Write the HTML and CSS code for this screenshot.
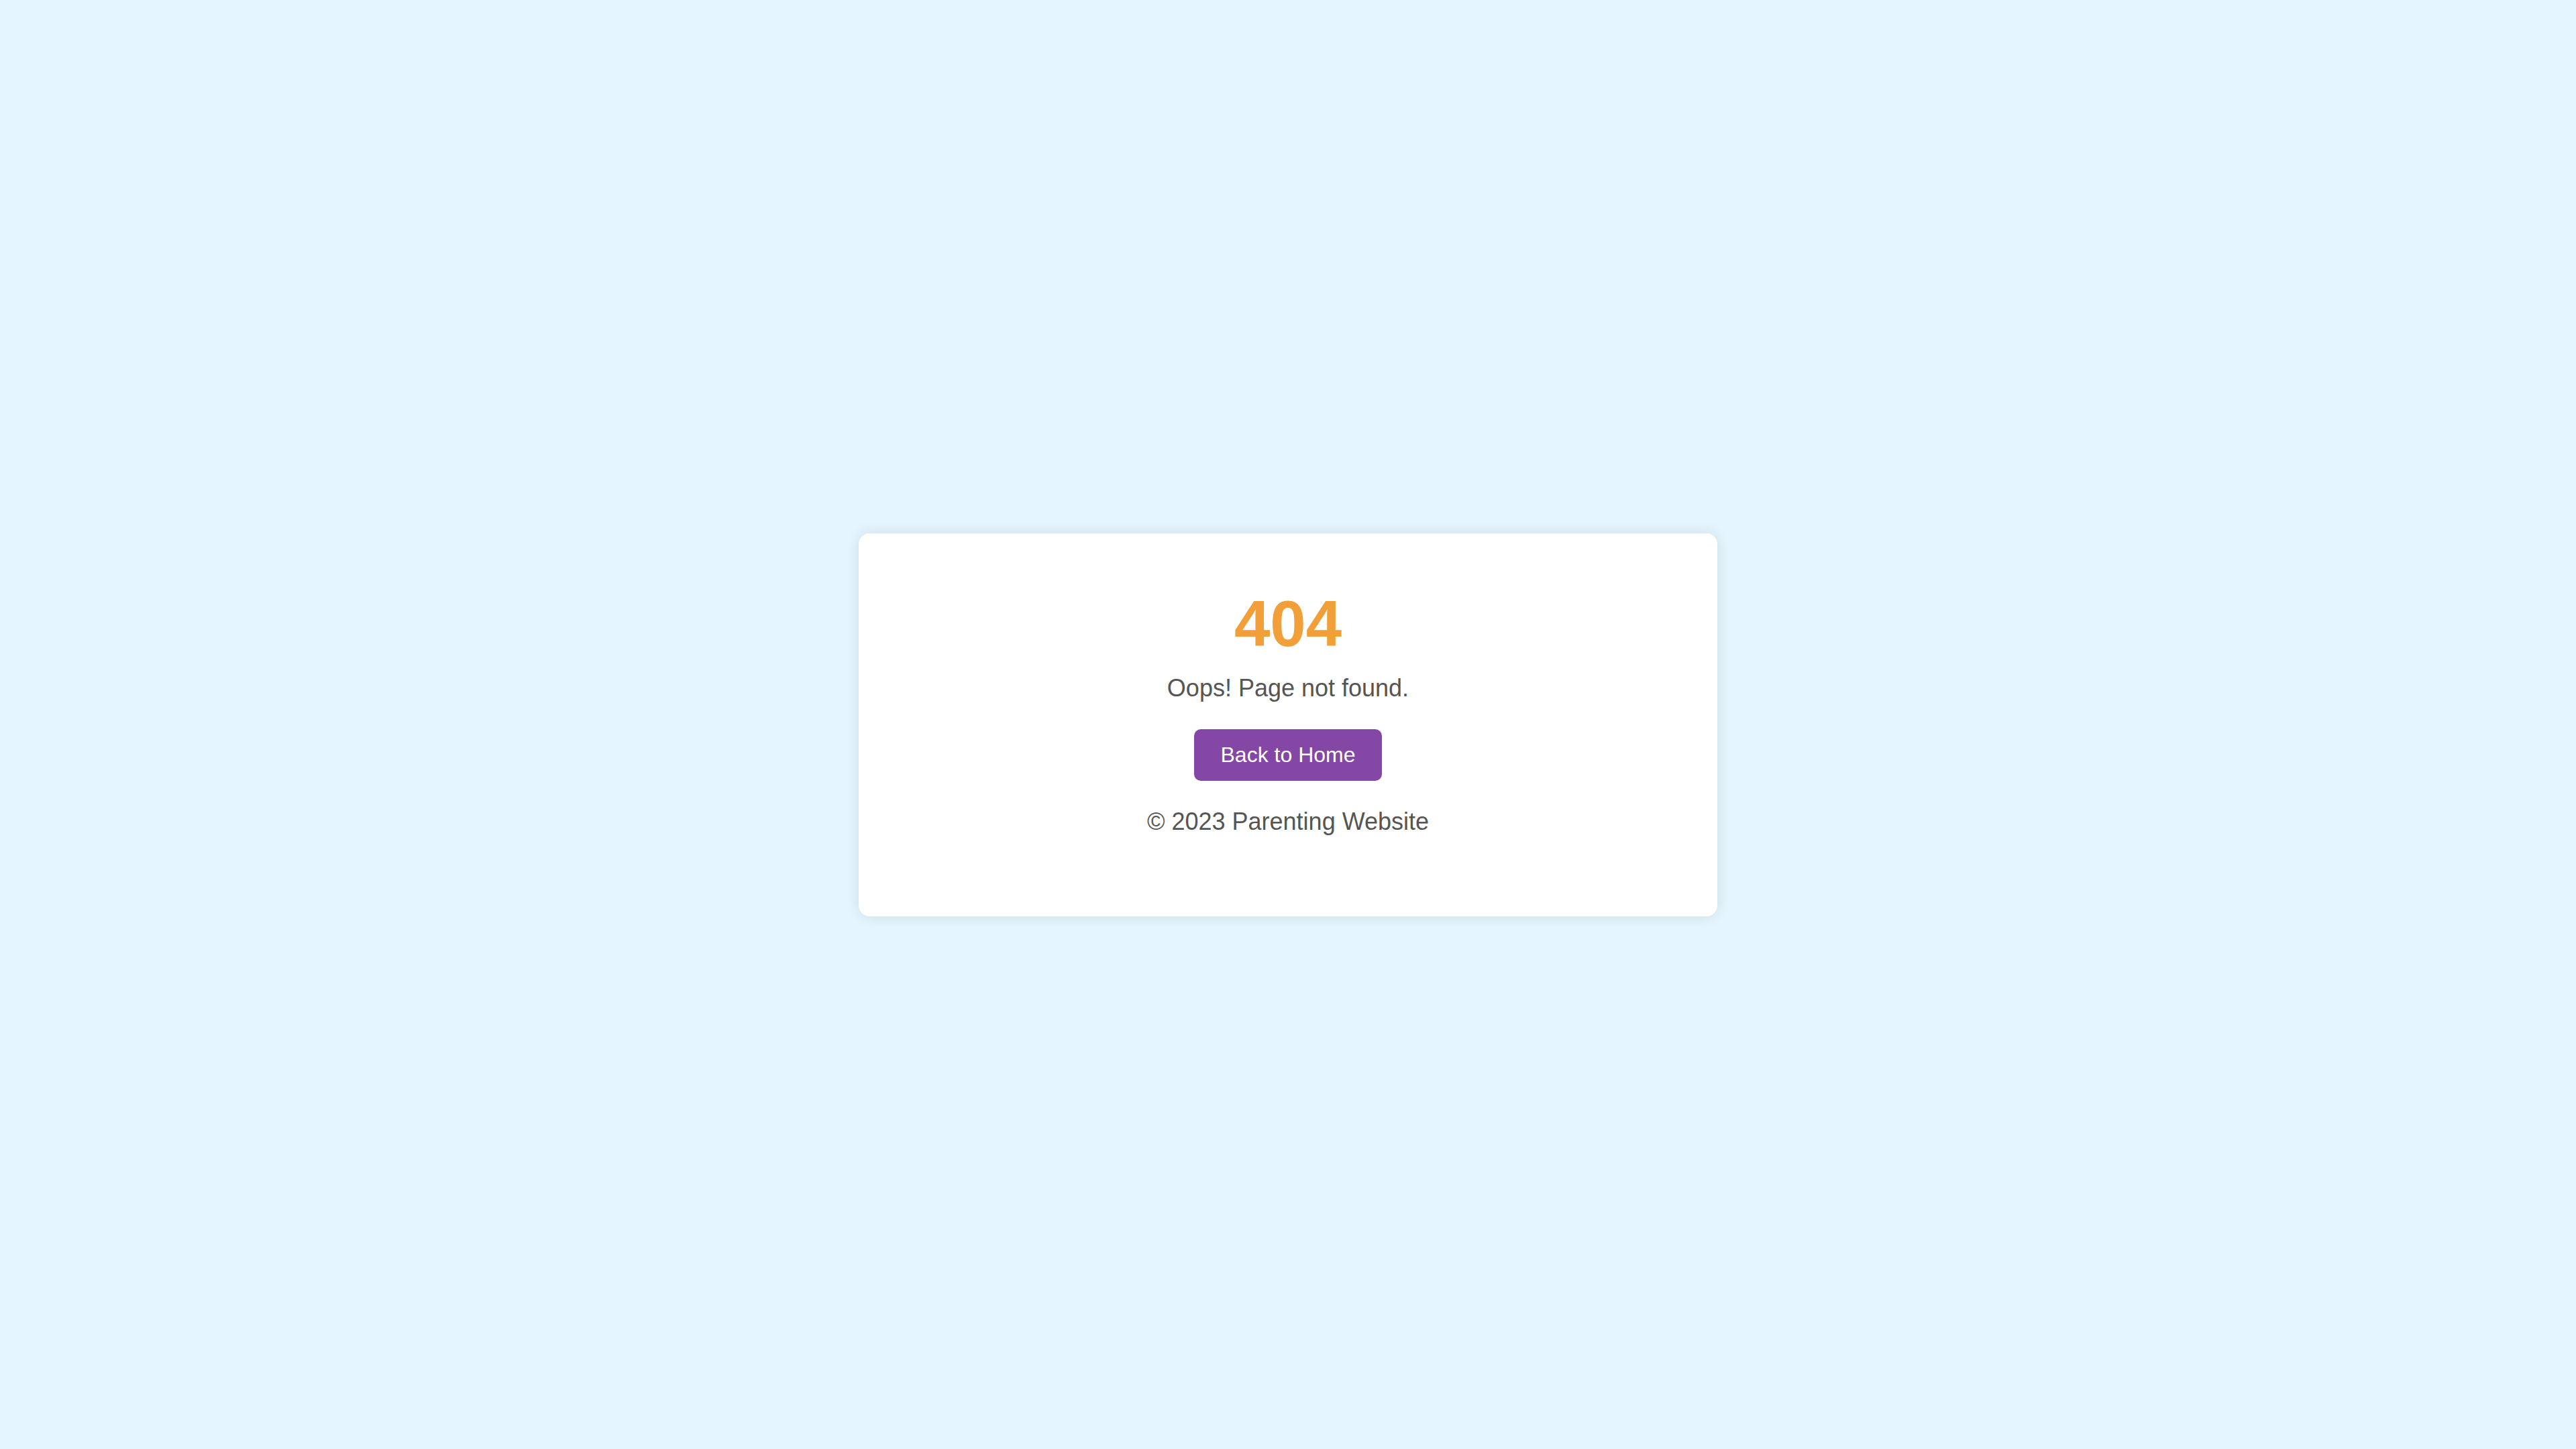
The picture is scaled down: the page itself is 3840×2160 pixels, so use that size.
FILE: index.html
```html
<!DOCTYPE html>
<html lang="en">
<head>
<meta charset="utf-8">
<meta name="viewport" content="width=device-width, initial-scale=1">
<title>404 - Page not found</title>
<link rel="stylesheet" href="styles.css">
</head>
<body>
<main class="card">
<h1 class="code">404</h1>
<p class="message">Oops! Page not found.</p>
<a class="home-link" href="/">Back to Home</a>
<p class="message">© 2023 Parenting Website</p>
</main>
</body>
</html>
```

FILE: styles.css
```css
* {
  box-sizing: border-box;
}

body {
  margin: 0;
  min-height: 100vh;
  display: flex;
  align-items: center;
  justify-content: center;
  background: #e4f5fd;
  font-family: "Liberation Sans", Arial, sans-serif;
}

.card {
  width: 100%;
  max-width: 1280px;
  padding: 80px;
  background: #fff;
  border-radius: 16px;
  box-shadow: 0 0 20px rgba(0, 0, 0, 0.1);
  text-align: center;
}

.code {
  margin: 0 0 20px;
  font-size: 96px;
  line-height: 110px;
  color: #f19f38;
}

.message {
  margin: 0 0 40px;
  font-size: 36px;
  line-height: 42px;
  color: #555;
}

.home-link {
  display: block;
  width: fit-content;
  margin: 0 auto 40px;
  padding: 20px 40px;
  border-radius: 10px;
  background: #8447a6;
  color: #fff;
  font-size: 32px;
  line-height: 37px;
  text-decoration: none;
}
```
